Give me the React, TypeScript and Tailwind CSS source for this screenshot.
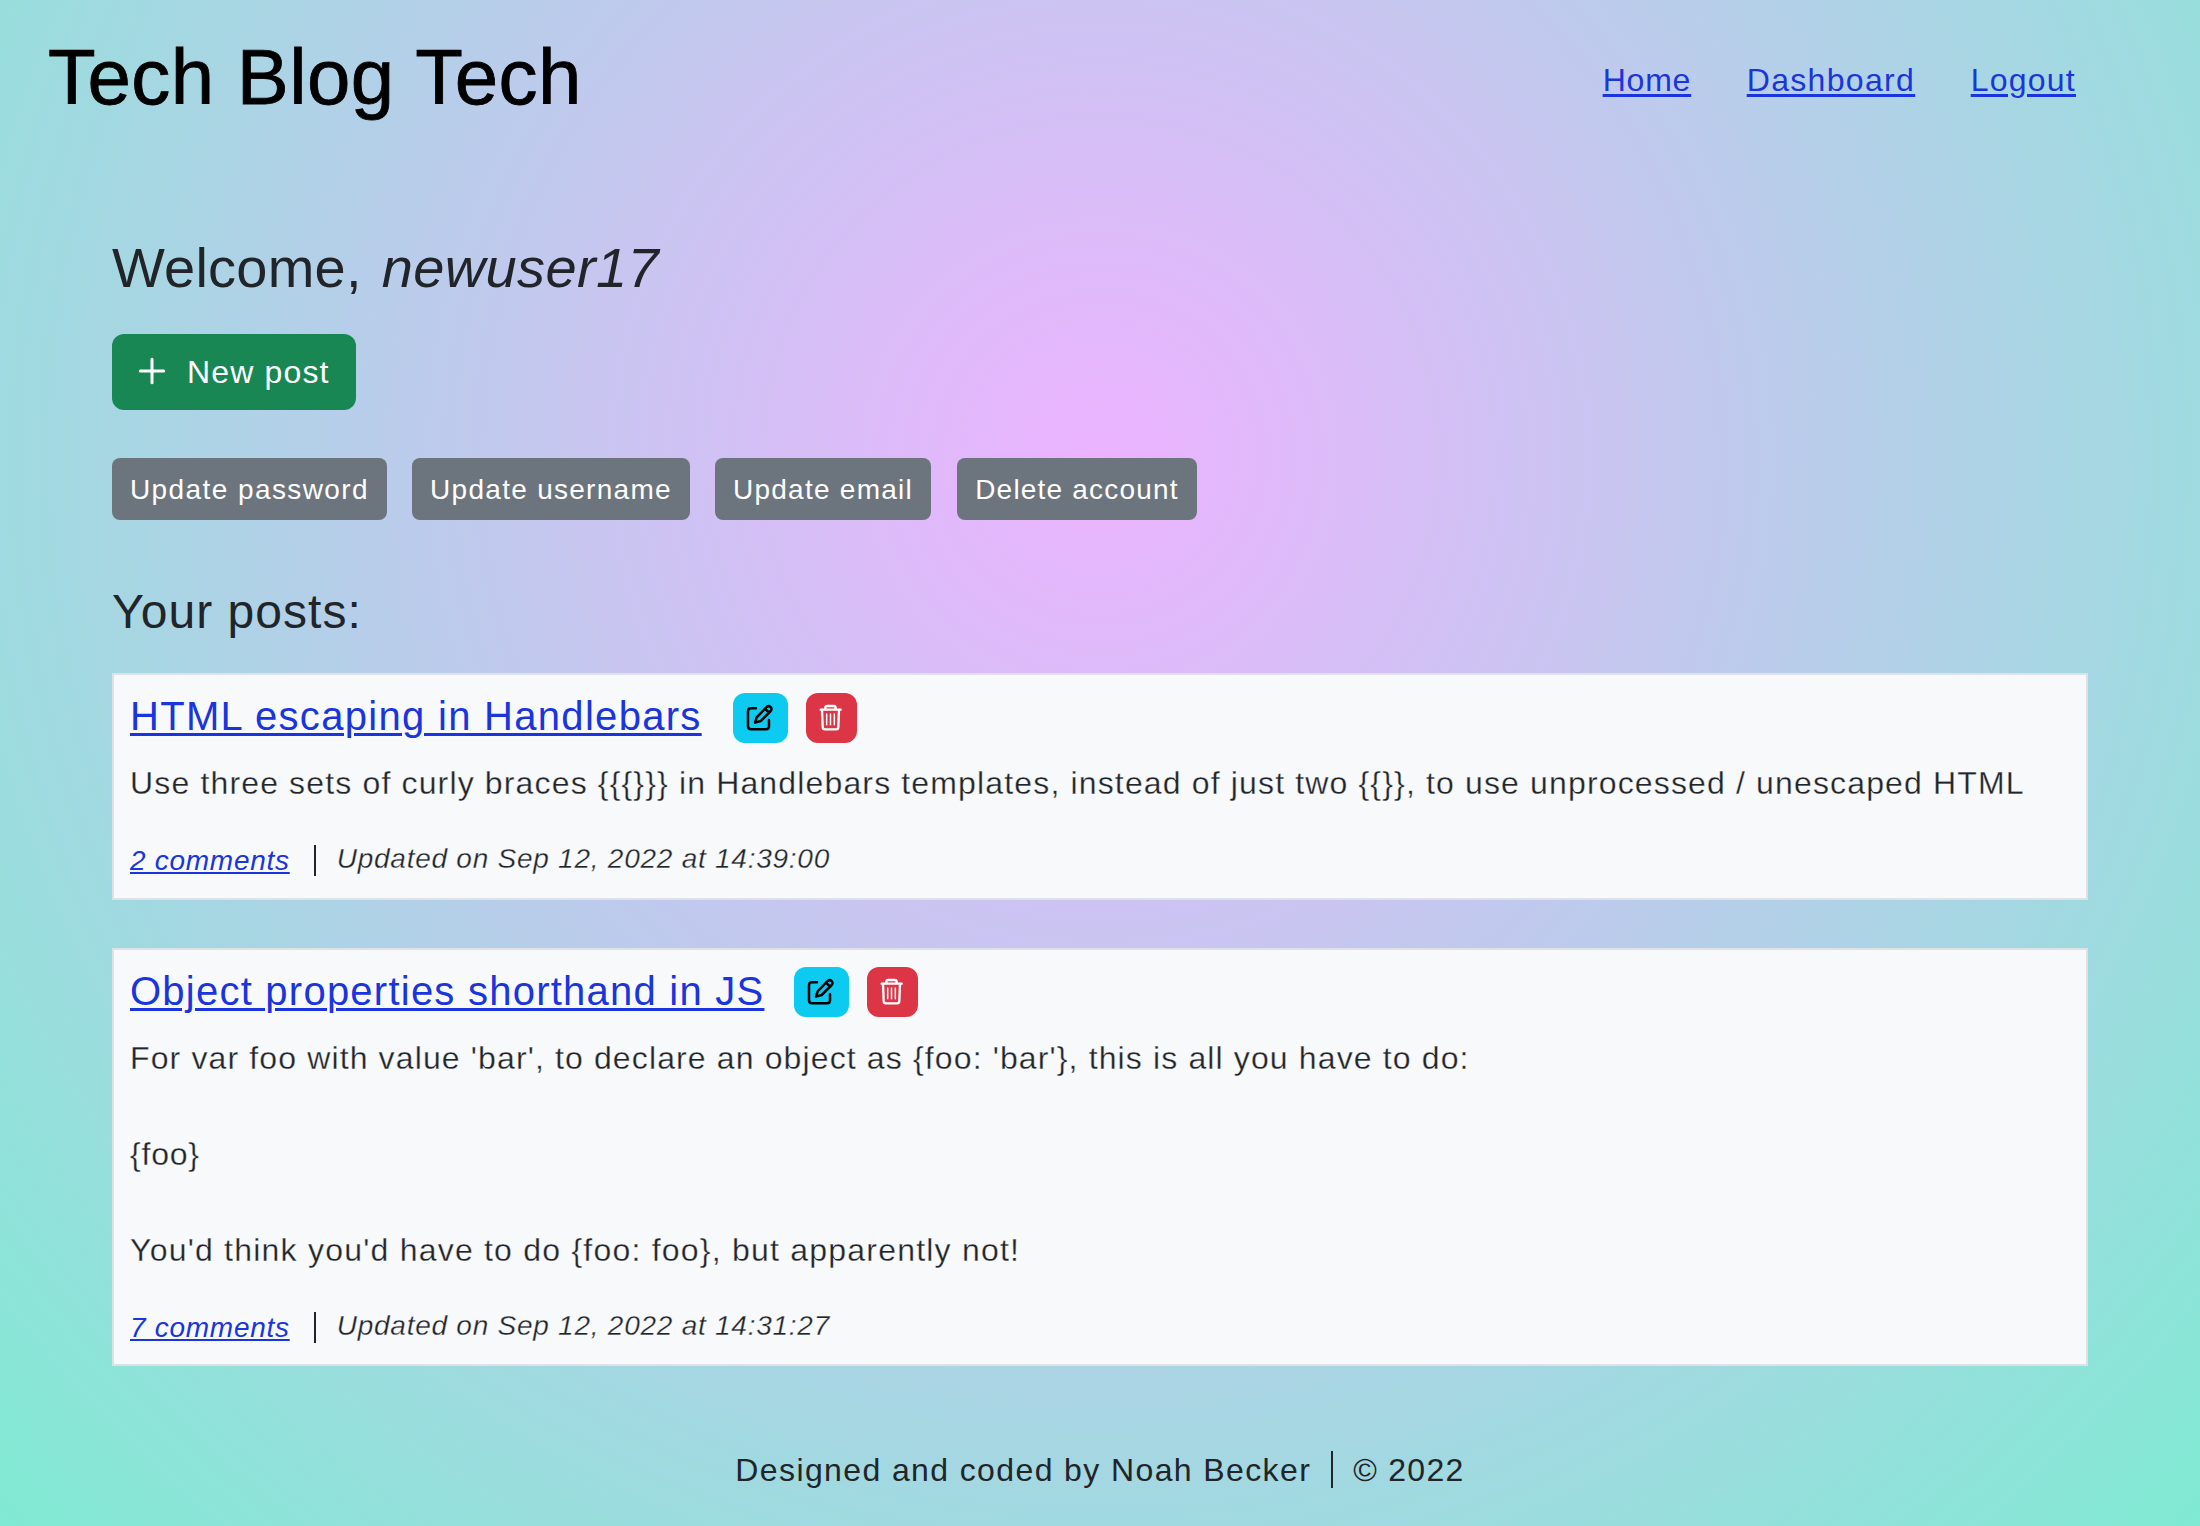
const FONT = 'font-["Liberation_Sans",Arial,sans-serif]';

type Line = { text: string; tracking: string };

type Post = {
  title: string;
  titleTracking: string;
  lines: Line[];
  comments: string;
  updated: string;
  height: string;
  actionsOffset: string;
};

const posts: Post[] = [
  {
    title: 'HTML escaping in Handlebars',
    titleTracking: 'tracking-[1.3px]',
    lines: [
      {
        text: 'Use three sets of curly braces {{{}}} in Handlebars templates, instead of just two {{}}, to use unprocessed / unescaped HTML',
        tracking: 'tracking-[1.15px]',
      },
    ],
    comments: '2 comments',
    updated: 'Updated on Sep 12, 2022 at 14:39:00',
    height: 'h-[227px]',
    actionsOffset: 'ml-[31px] mt-px',
  },
  {
    title: 'Object properties shorthand in JS',
    titleTracking: 'tracking-[1.236px]',
    lines: [
      {
        text: "For var foo with value 'bar', to declare an object as {foo: 'bar'}, this is all you have to do:",
        tracking: 'tracking-[1.13px]',
      },
      { text: '', tracking: '' },
      { text: '{foo}', tracking: 'tracking-[0.8px]' },
      { text: '', tracking: '' },
      { text: "You'd think you'd have to do {foo: foo}, but apparently not!", tracking: 'tracking-[1.22px]' },
    ],
    comments: '7 comments',
    updated: 'Updated on Sep 12, 2022 at 14:31:27',
    height: 'h-[418px]',
    actionsOffset: 'ml-[30px]',
  },
];

const accountActions = [
  { label: 'Update password', className: 'w-[275px] tracking-[1.42px]' },
  { label: 'Update username', className: 'ml-[25px] w-[278px] tracking-[1.28px]' },
  { label: 'Update email', className: 'ml-[25px] w-[216px] tracking-[1.26px]' },
  { label: 'Delete account', className: 'ml-[26px] w-[240px] tracking-[1.2px]' },
];

function PlusIcon() {
  return (
    <svg viewBox="0 0 28 28" className="-mt-0.5 size-7" fill="none" stroke="currentColor" strokeWidth="3" strokeLinecap="round">
      <path d="M14 2.3V25.7M2.3 14H25.7" />
    </svg>
  );
}

function EditIcon() {
  return (
    <svg viewBox="0 0 84 84" className="size-7" fill="none" stroke="currentColor" strokeWidth="7.5" strokeLinecap="round" strokeLinejoin="round">
      <path d="M30 13H15Q6 13 6 22V67Q6 76 15 76H60Q69 76 69 67V48" />
      <path d="M27 56L32 40L62 9Q68 4 74 9Q79 15 74 21L44 51Z" />
      <path d="M57 14L69 26" />
    </svg>
  );
}

function TrashIcon() {
  return (
    <svg viewBox="0 0 84 84" className="size-7" fill="none" stroke="currentColor" strokeWidth="7" strokeLinecap="round" strokeLinejoin="round">
      <path d="M11 17H71M25 15V12Q25 6 31 6H50Q56 6 56 12V15" />
      <path d="M15 18L17 69Q17 76 24 76H57Q64 76 64 69L66 18" />
      <path d="M29 30V62M40.5 30V62M52 30V62" strokeWidth="4.5" />
    </svg>
  );
}

function PostCard({ post }: { post: Post }) {
  return (
    <article className={`${post.height} border-2 border-[#dee2e6] bg-[#f8f9fb] px-4 pt-[17px]`}>
      <div className="flex h-[50px] items-start">
        <a href="#" className={`text-[40px] leading-[48px] text-[#1a35dd] underline decoration-[3px] underline-offset-[3px] ${post.titleTracking}`}>
          {post.title}
        </a>
        <div className={`flex gap-[18px] ${post.actionsOffset}`}>
          <button aria-label="Edit" className="flex h-[50px] w-[55px] rounded-xl bg-[#0dcaf0] pl-[13px] pt-[11px] text-black">
            <EditIcon />
          </button>
          <button aria-label="Delete" className="flex h-[50px] w-[51px] rounded-xl bg-[#dc3545] pl-[11px] pt-[11px] text-white">
            <TrashIcon />
          </button>
        </div>
      </div>
      <div className="mt-[17px] text-[32px] leading-[48px] [-webkit-text-stroke:0.3px_#f8f9fb]">
        {post.lines.map((line, i) => (
          <p key={i} className={`h-12 whitespace-nowrap ${line.tracking}`}>
            {line.text}
          </p>
        ))}
      </div>
      <div className="mt-8 flex items-start text-[28px] italic leading-[42px]">
        <a href="#" className="mt-px text-[#1a35dd] underline decoration-2 underline-offset-[2px] tracking-[0.72px]">
          {post.comments}
        </a>
        <span className="ml-6 mt-[6px] h-[31px] w-0.5 bg-[#212529]" />
        <span className="-mt-px ml-[21px] tracking-[0.75px] [-webkit-text-stroke:0.3px_#f8f9fb]">{post.updated}</span>
      </div>
    </article>
  );
}

export default function App() {
  return (
    <div className={`min-h-[1526px] bg-[radial-gradient(circle_at_50%_30%,#ecb3ff,#80ead3)] text-[#212529] ${FONT}`}>
      <header className="flex h-[234px] items-start justify-between pl-12 pr-[124px]">
        <h1 className="mt-[37px] text-[78px] leading-[80px] tracking-[0.45px] text-black [-webkit-text-stroke:0.8px_#000]">
          Tech Blog Tech
        </h1>
        <nav className="mt-14 flex gap-[55.5px] text-[32px] leading-[48px] text-[#1a35dd]">
          <a href="#" className="underline decoration-[3px] underline-offset-[3px] tracking-[0.8px]">Home</a>
          <a href="#" className="underline decoration-[3px] underline-offset-[3px] tracking-[1.33px]">Dashboard</a>
          <a href="#" className="underline decoration-[3px] underline-offset-[3px] tracking-[1.23px]">Logout</a>
        </nav>
      </header>

      <main className="px-28">
        <h2 className="flex gap-5 text-[56px] leading-[68px]">
          <span className="tracking-[0.23px]">Welcome,</span>
          <em className="tracking-[0.35px]">newuser17</em>
        </h2>
        <button className="mt-8 flex h-[76px] w-[244px] items-center rounded-xl bg-[#198754] pl-[26px] text-white">
          <PlusIcon />
          <span className="ml-[21px] text-[32px] leading-[48px] tracking-[1.15px]">New post</span>
        </button>
        <div className="mt-12 flex">
          {accountActions.map((action) => (
            <button
              key={action.label}
              className={`h-[62px] rounded-lg bg-[#6c757d] pt-px text-[28px] leading-[42px] text-white ${action.className}`}
            >
              {action.label}
            </button>
          ))}
        </div>
        <h3 className="mt-[63px] text-[48px] leading-[58px] tracking-[1.05px]">Your posts:</h3>
        <div className="mt-8 flex flex-col gap-12">
          {posts.map((post) => (
            <PostCard key={post.title} post={post} />
          ))}
        </div>
      </main>

      <footer className="mt-20 flex items-start justify-center text-[32px] leading-[48px]">
        <span className="tracking-[1.385px]">Designed and coded by Noah Becker</span>
        <span className="ml-5 mt-[5px] h-[37px] w-0.5 bg-[#212529]" />
        <span className="ml-5 tracking-[1.3px]">© 2022</span>
      </footer>
    </div>
  );
}
